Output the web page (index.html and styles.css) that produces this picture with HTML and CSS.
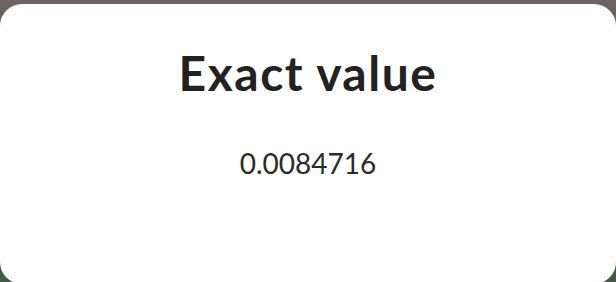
FILE: index.html
```
<!DOCTYPE html>
<html>
<head>
<meta charset="utf-8">
<link rel="stylesheet" href="styles.css">
</head>
<body>
<div class="card">
  <h1 class="title">Exact value</h1>
  <p class="value">0.0084716</p>
</div>
</body>
</html>
```
FILE: styles.css
```
html, body {
  margin: 0;
  padding: 0;
  height: 100%;
}
body {
  background: linear-gradient(180deg, #6e6163 0%, #5e6058 60%, #3f5a45 100%);
  font-family: "Lato", "Noto Sans", sans-serif;
  overflow: hidden;
}
.card {
  margin-top: 4px;
  height: 280px;
  background: #ffffff;
  border-radius: 22px;
  text-align: center;
  padding-top: 41px;
  box-sizing: border-box;
  color: #222222;
}
.title {
  margin: 0;
  font-size: 48px;
  font-weight: 700;
  line-height: 56px;
  letter-spacing: 1.5px;
}
.value {
  margin: 47px 0 0;
  font-size: 28px;
  font-weight: 400;
  line-height: 30px;
  color: #2a2a2a;
}
```
